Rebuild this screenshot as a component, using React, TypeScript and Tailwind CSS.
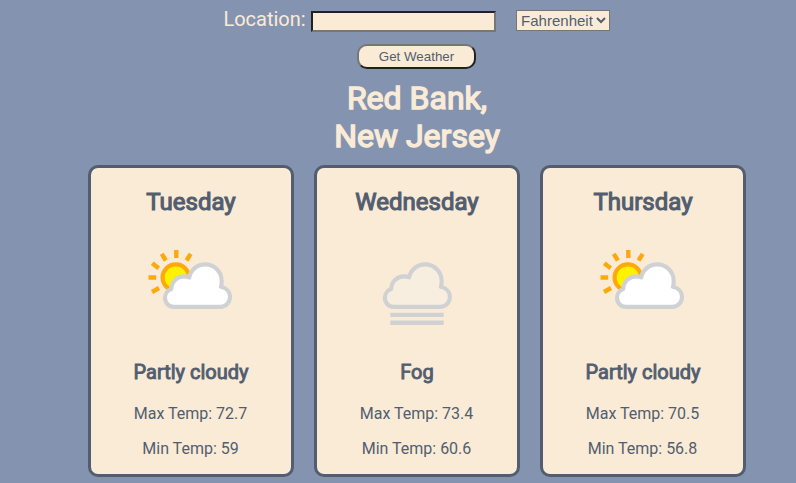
type Kind = 'Partly cloudy' | 'Fog';

const days: { day: string; kind: Kind; max: string; min: string }[] = [
  { day: 'Tuesday', kind: 'Partly cloudy', max: '72.7', min: '59' },
  { day: 'Wednesday', kind: 'Fog', max: '73.4', min: '60.6' },
  { day: 'Thursday', kind: 'Partly cloudy', max: '70.5', min: '56.8' },
];

const CLOUD =
  'M12.5 56.5C7.5 56.5 3.5 52.5 3.5 47.5C3.5 43.5 6.5 40 10 38.8C10 31.5 16 26 23 26C25 26 27 26.3 28.5 27C30 19.5 37 14 45 14C54.5 14 62 21.5 62 31C62 33 61.7 35 61.200 36.500C66.500 37.500 70.500 41.500 70.500 46.800C70.500 52.300 66 56.500 60.500 56.500Z';

function Cloud({ x, fill }: { x: number; fill: string }) {
  return (
    <path
      d={CLOUD}
      transform={`translate(${x} 10.3) scale(.97 1)`}
      fill={fill}
      stroke="#cfd1d3"
      strokeWidth="4.2"
      strokeLinejoin="round"
    />
  );
}

function PartlyCloudyIcon() {
  return (
    <svg width="100" height="90" viewBox="0 0 100 90" fill="none">
      <circle cx="35.800" cy="37.500" r="13.200" fill="#fff200" stroke="#fea90b" strokeWidth="4.200" />
      <path
        d="M36.300 10v8M21.700 13.800l4.200 6.700M12.200 23.200l6.500 5M8.500 37.500h7.700M12 52l7-4M50.700 13.800l-4.200 6.700"
        stroke="#fea90b"
        strokeWidth="4.400"
      />
      <Cloud x={21.6} fill="#fff" />
    </svg>
  );
}

function FogIcon() {
  return (
    <svg width="100" height="90" viewBox="0 0 100 90" fill="none">
      <Cloud x={15.5} fill="#f8eee0" />
      <path d="M24.300 74.900h53.400M24.300 82.700h53.400" stroke="#cfd1d3" strokeWidth="4.400" />
    </svg>
  );
}

export default function App() {
  return (
    <main className="h-[483px] overflow-hidden bg-[#8494b0] pl-[38px] font-[Roboto,sans-serif] text-[#525e6f]">
      <form className="flex flex-col items-center">
        <div className="flex h-[44px] items-start pt-[7px]">
          <label htmlFor="location" className="mr-[5.500px] -ml-[0.500px] text-[20px] leading-6 text-[#faebd7]">
            Location:
          </label>
          <input
            id="location"
            className="mt-1 h-[21px] w-[185px] border-2 border-t-[#212121] border-r-[#767676] border-b-[#767676] border-l-[#212121] bg-[#faebd7] outline-none"
          />
          <select className="mt-[3px] ml-5 h-[21px] w-[94px] border border-[#767676] bg-[#faebd7] font-['Liberation_Sans',sans-serif] text-[15px]">
            <option>Fahrenheit</option>
            <option>Celsius</option>
          </select>
        </div>
        <button
          type="button"
          className="mr-px h-[25px] w-[119px] rounded-[10px] border-2 border-t-[#767676] border-r-[#212121] border-b-[#212121] border-l-[#767676] bg-[#faebd7] font-['Liberation_Sans',sans-serif] text-[13.333px] leading-[15px]"
        >
          Get Weather
        </button>
      </form>
      <h1 className="mt-[10px] h-[86px] text-center text-[32px] leading-[38px] text-[#faebd7] [-webkit-text-stroke:1.4px_currentColor]">
        Red Bank,
        <br />
        New Jersey
      </h1>
      <section className="flex justify-center gap-5">
        {days.map((d) => (
          <article
            key={d.day}
            className="flex h-[312px] w-[206px] flex-col items-center rounded-[10px] border-3 border-[#525e6f] bg-[#faebd7] pt-5"
          >
            <h2 className="text-[24px] leading-7 [-webkit-text-stroke:1.1px_currentColor]">{d.day}</h2>
            <div className="mt-6 mr-0.5 h-[90px]">{d.kind === 'Fog' ? <FogIcon /> : <PartlyCloudyIcon />}</div>
            <h3 className="mt-[30px] text-[20px] leading-6 [-webkit-text-stroke:0.9px_currentColor]">{d.kind}</h3>
            <p className="mt-5 mr-px text-[16px] leading-[19px]">Max Temp: {d.max}</p>
            <p className="mt-4 mr-px text-[16px] leading-[19px]">Min Temp: {d.min}</p>
          </article>
        ))}
      </section>
    </main>
  );
}
